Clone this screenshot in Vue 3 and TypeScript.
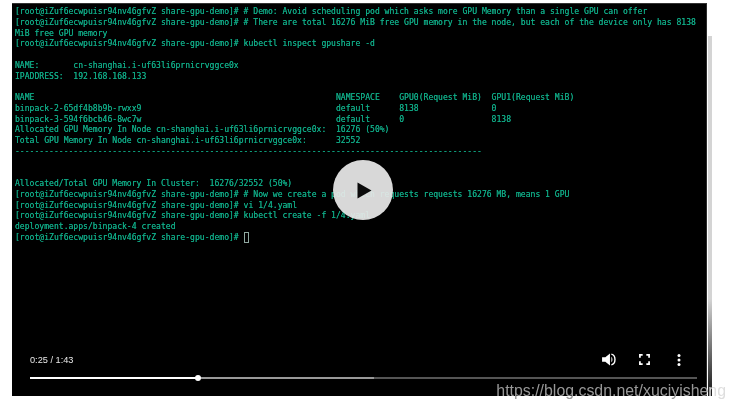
<script setup lang="ts">
const lines: string[] = [
  '[root@iZuf6ecwpuisr94nv46gfvZ share-gpu-demo]# # Demo: Avoid scheduling pod which asks more GPU Memory than a single GPU can offer',
  '[root@iZuf6ecwpuisr94nv46gfvZ share-gpu-demo]# # There are total 16276 MiB free GPU memory in the node, but each of the device only has 8138',
  'MiB free GPU memory',
  '[root@iZuf6ecwpuisr94nv46gfvZ share-gpu-demo]# kubectl inspect gpushare -d',
  '',
  'NAME:       cn-shanghai.i-uf63li6prnicrvggce0x',
  'IPADDRESS:  192.168.168.133',
  '',
  'NAME                                                              NAMESPACE    GPU0(Request MiB)  GPU1(Request MiB)',
  'binpack-2-65df4b8b9b-rwxx9                                        default      8138               0',
  'binpack-3-594f6bcb46-8wc7w                                        default      0                  8138',
  'Allocated GPU Memory In Node cn-shanghai.i-uf63li6prnicrvggce0x:  16276 (50%)',
  'Total GPU Memory In Node cn-shanghai.i-uf63li6prnicrvggce0x:      32552',
  '-'.repeat(96),
  '',
  '',
  'Allocated/Total GPU Memory In Cluster:  16276/32552 (50%)',
  '[root@iZuf6ecwpuisr94nv46gfvZ share-gpu-demo]# # Now we create a pod which requests requests 16276 MB, means 1 GPU',
  '[root@iZuf6ecwpuisr94nv46gfvZ share-gpu-demo]# vi 1/4.yaml',
  '[root@iZuf6ecwpuisr94nv46gfvZ share-gpu-demo]# kubectl create -f 1/4.yaml',
  'deployment.apps/binpack-4 created',
]
const prompt = '[root@iZuf6ecwpuisr94nv46gfvZ share-gpu-demo]# '
</script>

<template>
  <div class="page">
    <div class="player">
      <div class="terminal">
        <div v-for="(line, i) in lines" :key="i" class="line">{{ line }}</div>
        <div class="line">{{ prompt }}<span class="cursor"></span></div>
      </div>

      <div class="play">
        <svg width="15" height="17" viewBox="0 0 15 17"><path d="M0.5 0.5 L14.5 8.5 L0.5 16.5 Z" fill="#0b0b0b" /></svg>
      </div>

      <div class="controls">
        <div class="row">
          <span class="time">0:25 / 1:43</span>
          <div class="icons">
            <svg width="15" height="13" viewBox="0 0 16 14">
              <path d="M0 4.5 H3.5 L8.5 0.5 V13.5 L3.5 9.5 H0 Z" fill="#fff" />
              <path d="M10 4 C11.5 5 11.5 9 10 10 Z" fill="#fff" />
              <path d="M10 1.2 C15.2 2.5 15.2 11.5 10 12.8" fill="none" stroke="#fff" stroke-width="1.5" />
            </svg>
            <svg width="11" height="11" viewBox="0 0 12 12">
              <path d="M1 4 V1 H4 M8 1 H11 V4 M11 8 V11 H8 M4 11 H1 V8" fill="none" stroke="#fff" stroke-width="1.9" />
            </svg>
            <svg class="more" width="4" height="12" viewBox="0 0 4 12">
              <circle cx="2" cy="1.6" r="1.5" fill="#fff" />
              <circle cx="2" cy="6" r="1.5" fill="#fff" />
              <circle cx="2" cy="10.4" r="1.5" fill="#fff" />
            </svg>
          </div>
        </div>
        <div class="track">
          <div class="buffered"></div>
          <div class="progress"><span class="thumb"></span></div>
        </div>
      </div>
    </div>
    <div class="scrollbar"></div>
    <div class="watermark">https://blog.csdn.net/xuciyishe<span class="fade">ng</span></div>
  </div>
</template>

<style>
html, body { margin: 0; background: #fff; overflow: hidden; }
</style>

<style scoped>
.page {
  position: relative;
  display: flex;
  align-items: flex-start;
  width: 735px;
  height: 410px;
  padding: 3px 0 0 12px;
  box-sizing: border-box;
  background: #fff;
  overflow: hidden;
}
.player {
  position: relative;
  width: 695px;
  height: 393px;
  flex: none;
  background: #000;
  border-top: 1px solid #333;
  box-sizing: border-box;
  border-right: 1px solid #2c2c2c;
}
.terminal {
  padding: 2px 0 0 3px;
  font-family: "DejaVu Sans Mono", "Liberation Mono", monospace;
  font-size: 8.08px;
  line-height: 10.75px;
  color: #0fa884;
  white-space: pre;
  text-shadow: 0 0 0.6px #0fa884;
  filter: blur(0.35px);
}
.line { height: 10.75px; }
.cursor {
  display: inline-block;
  width: 3px;
  height: 9px;
  border: 1px solid #8fa8a0;
  vertical-align: top;
}
.play {
  position: absolute;
  left: 321px;
  top: 156px;
  width: 60px;
  height: 60px;
  border-radius: 50%;
  background: rgba(232, 232, 232, 0.93);
  display: flex;
  align-items: center;
  justify-content: center;
}
.play svg { margin-left: 3px; }
.controls {
  position: absolute;
  left: 18px;
  right: 9px;
  bottom: 17px;
  display: flex;
  flex-direction: column;
  gap: 11px;
}
.row {
  display: flex;
  align-items: center;
  justify-content: space-between;
}
.time {
  font-family: "Liberation Sans", Arial, sans-serif;
  font-size: 9.2px;
  color: #e8e8e8;
  filter: blur(0.3px);
}
.icons {
  display: flex;
  align-items: center;
  gap: 22px;
  padding-right: 16px;
}
.more { margin-left: 5px; }
.track {
  position: relative;
  height: 2px;
  background: #555;
}
.buffered {
  position: absolute;
  left: 0;
  top: 0;
  height: 100%;
  width: 344px;
  background: #999;
}
.progress {
  position: absolute;
  left: 0;
  top: 0;
  height: 100%;
  width: 168px;
  background: #fff;
}
.thumb {
  position: absolute;
  right: -3px;
  top: -2px;
  width: 6px;
  height: 6px;
  border-radius: 50%;
  background: #fff;
}
.scrollbar {
  width: 4px;
  height: 360px;
  flex: none;
  margin: 33px 0 0 1px;
  background: linear-gradient(#d4d4d4 0, #d4d4d4 73%, #2a2a2a 97%, #1a1a1a 100%);
}
.watermark {
  position: absolute;
  right: 9px;
  top: 381px;
  font-family: "Liberation Sans", Arial, sans-serif;
  font-size: 15.9px;
  line-height: 20px;
  color: #989898;
  filter: blur(0.3px);
}
.fade { color: #dedede; }
</style>
